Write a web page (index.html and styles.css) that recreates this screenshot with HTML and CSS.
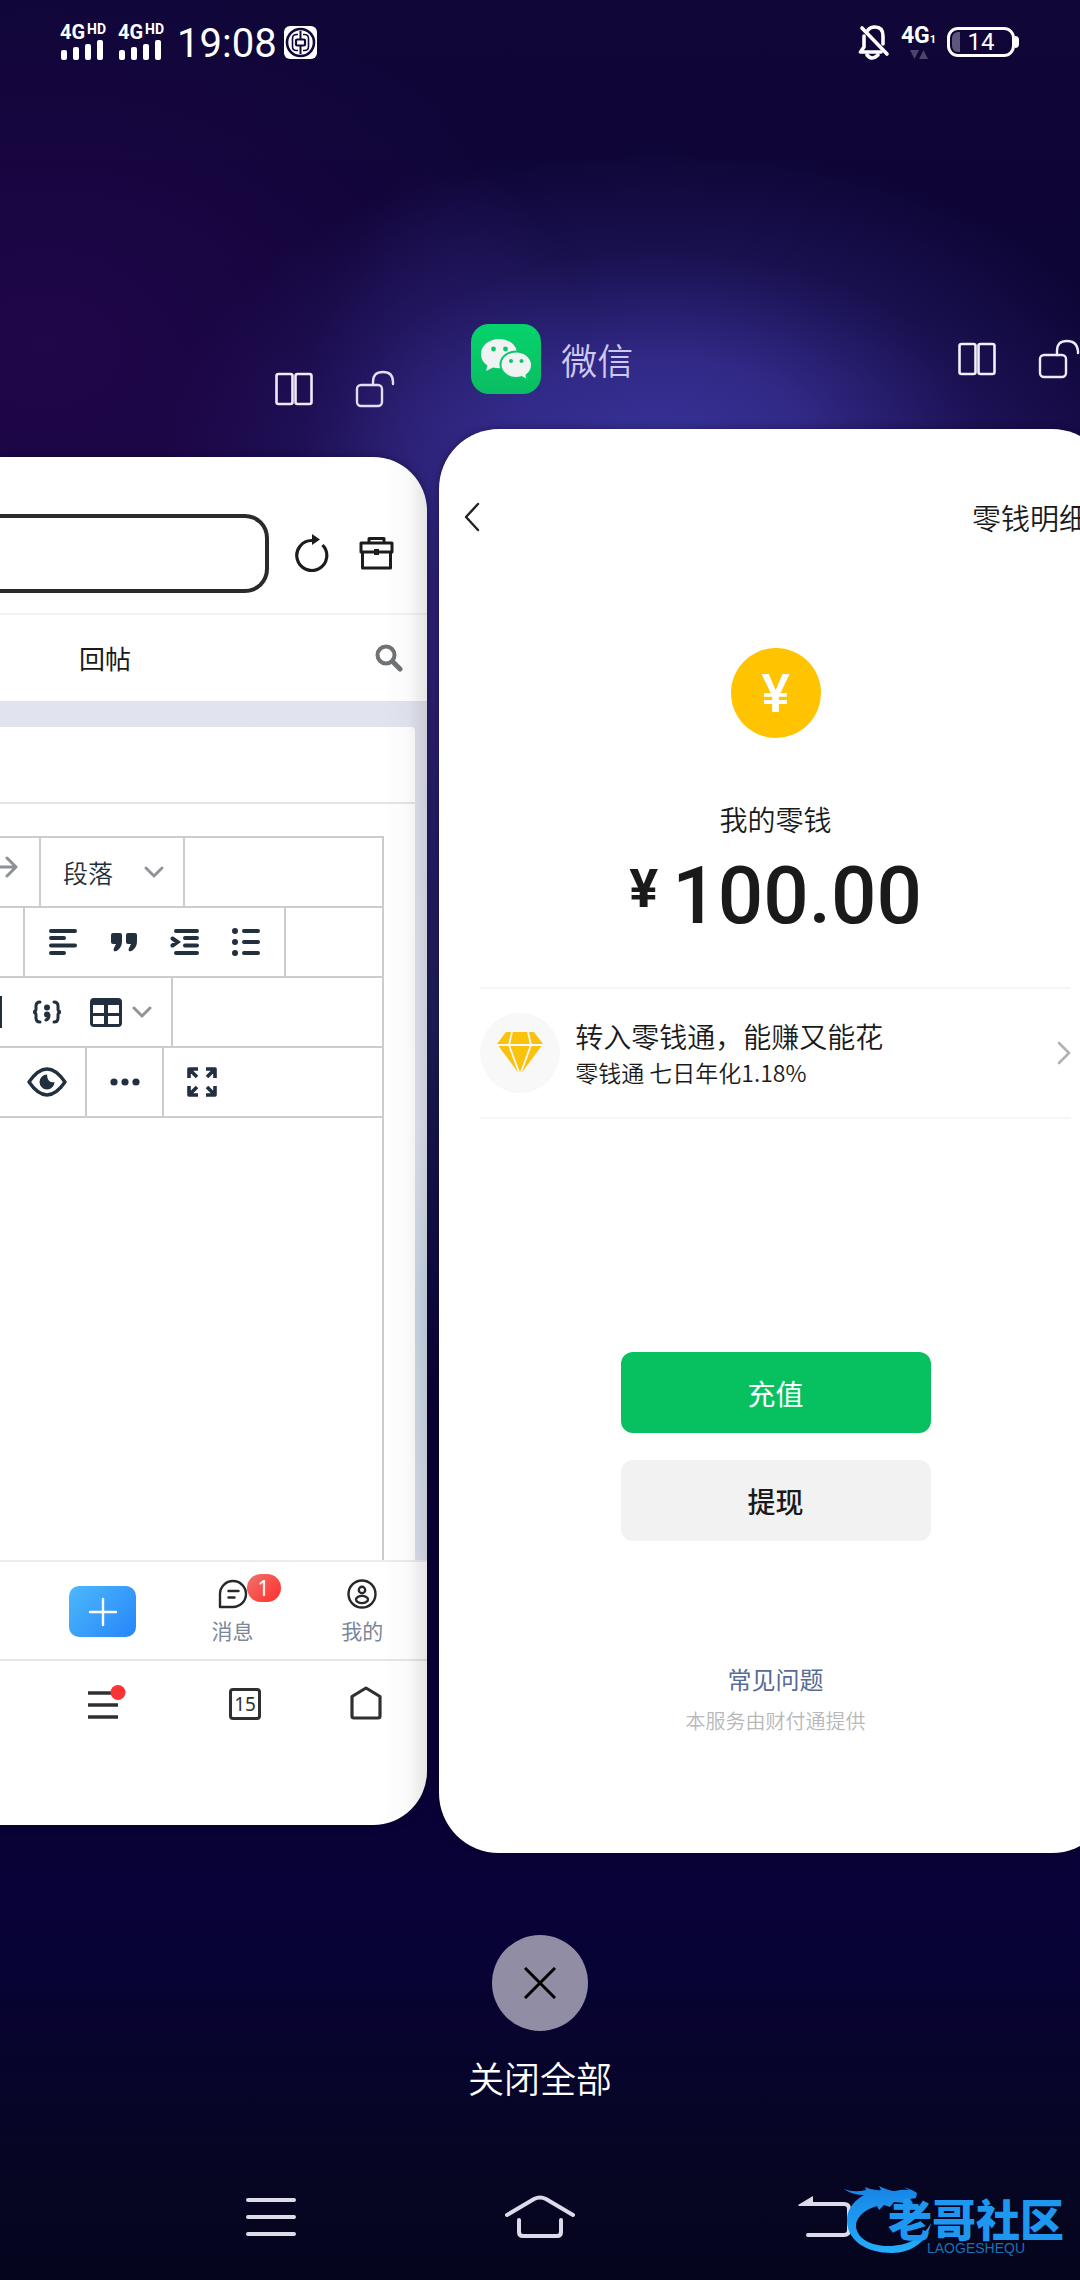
FILE: index.html
```html
<!DOCTYPE html>
<html lang="zh-CN">
<head>
<meta charset="utf-8">
<meta name="viewport" content="width=device-width, initial-scale=1">
<title>最近任务</title>
<link rel="stylesheet" href="styles.css">
</head>
<body>
<header class="status">
  <div class="status-group">
    <div class="signal">
      <div class="signal-label"><b>4G</b><b class="hd">HD</b></div>
      <svg width="44" height="20" viewBox="0 0 44 20" fill="#fff"><rect x="1" y="10" width="6" height="10" rx="2"/><rect x="13" y="7" width="6" height="13" rx="2"/><rect x="25" y="4" width="6" height="16" rx="2"/><rect x="37" y="0" width="6" height="20" rx="2"/></svg>
    </div>
    <div class="signal">
      <div class="signal-label"><b>4G</b><b class="hd">HD</b></div>
      <svg width="44" height="20" viewBox="0 0 44 20" fill="#fff"><rect x="1" y="10" width="6" height="10" rx="2"/><rect x="13" y="7" width="6" height="13" rx="2"/><rect x="25" y="4" width="6" height="16" rx="2"/><rect x="37" y="0" width="6" height="20" rx="2"/></svg>
    </div>
    <time class="clock">19:08</time>
    <svg width="33" height="33" viewBox="0 0 33 33"><rect width="33" height="33" rx="6" fill="#fff"/><g fill="none" stroke="#12073a"><circle cx="16.500" cy="16.500" r="13.500" stroke-width="2.600"/><path d="M14 8.500h-1.500q-4 0-4 4v8q0 4 4 4H14M19 8.500h1.500q4 0 4 4v8q0 4-4 4H19" stroke-width="1.600"/><rect x="12" y="13.500" width="9" height="6" rx="1" stroke-width="2.200"/><path d="M16.500 5v8M16.500 20v8" stroke-width="2"/></g></svg>
  </div>
  <div class="status-group status-right">
    <svg width="32" height="36" viewBox="0 0 32 36" fill="none" stroke="#fff" stroke-width="3.600" stroke-linecap="round" stroke-linejoin="round"><path d="M6 12v11l-3.500 5H23M10 6q2-3 7-3 8 0 8 9v8"/><path d="M9 31q5 6 11 0"/><path d="M4 4l25 26"/></svg>
    <div class="net">
      <div class="net-label"><b>4G</b><b class="sim">1</b></div>
      <svg width="18" height="10" viewBox="0 0 18 10" fill="#4b446c"><path d="M0 0h9L4.500 9zM9 9h9L13.500 0z"/></svg>
    </div>
    <div class="battery"><span class="battery-fill"></span><span class="battery-text">14</span></div>
  </div>
</header>

<main class="recents">
  <section class="task task-browser">
    <div class="task-head">
      <button class="icon-btn" aria-label="分屏"><svg width="38" height="34" viewBox="0 0 38 34" fill="none" stroke="#f3e9fb" stroke-width="2.600"><rect x="1.500" y="2" width="16" height="30" rx="2"/><rect x="20.500" y="2" width="16" height="30" rx="2"/></svg></button>
      <button class="icon-btn" aria-label="锁定"><svg width="40" height="38" viewBox="0 0 40 38" fill="none" stroke="#e6dcf6" stroke-width="2.400" stroke-linecap="round"><rect x="2" y="15" width="25" height="21" rx="4"/><path d="M18 15v-3q0-10 10-10t10 10v2"/></svg></button>
    </div>
    <article class="card browser">
      <div class="address">
        <input class="url" type="text" aria-label="地址">
        <button class="icon-btn" aria-label="刷新"><svg width="34" height="38" viewBox="0 0 34 38"><path d="M27.500 10.500A15 15 0 1 1 17 6" fill="none" stroke="#1c1c1c" stroke-width="3.200" transform="translate(0 0.500)"/><path d="M17 0l8 5.500-8 5.500z" fill="#1c1c1c"/></svg></button>
        <button class="icon-btn" aria-label="工具箱"><svg width="35" height="34" viewBox="0 0 35 34" fill="none" stroke="#1c1c1c" stroke-width="3" stroke-linejoin="round"><path d="M2 7h31v9H2zM3.500 16v16h28V16M10 7V2.500h15V7"/><path d="M17.500 13v6" stroke-width="5"/></svg></button>
      </div>
      <div class="tabs">
        <a class="tab" href="#reply">回帖</a>
        <button class="icon-btn" aria-label="搜索"><svg width="28" height="28" viewBox="0 0 28 28" fill="none" stroke="#6f7376" stroke-linecap="round"><circle cx="11" cy="11" r="8.500" stroke-width="4"/><path d="M18 18l7 7" stroke-width="5"/></svg></button>
      </div>
      <div class="page">
        <div class="panel">
          <div class="panel-title"></div>
          <div class="editor">
            <div class="tools">
              <div class="group group-redo"><button class="icon-btn" aria-label="重做"><svg width="20" height="24" viewBox="0 0 20 24" fill="none" stroke="#8d9095" stroke-width="3" stroke-linecap="round" stroke-linejoin="round"><path d="M0 12h16M7 3l9 9-9 9"/></svg></button></div>
              <div class="group group-format">
                <select class="format" aria-label="段落格式"><option>段落</option></select>
                <svg width="20" height="12" viewBox="0 0 20 12" fill="none" stroke="#919499" stroke-width="3" stroke-linecap="round" stroke-linejoin="round"><path d="M2 2l8 8 8-8"/></svg>
              </div>
            </div>
            <div class="tools">
              <div class="group group-lead"></div>
              <div class="group group-lists">
                <button class="tool" aria-label="左对齐"><svg width="30" height="28" viewBox="0 0 30 28" stroke="#222f3e" stroke-width="4" stroke-linecap="round"><path d="M3 3h24M3 10h13M3 17.500h24M3 25h13"/></svg></button>
                <button class="tool" aria-label="引用"><svg width="28" height="20" viewBox="0 0 28 20" fill="#222f3e"><path d="M2 1h8q2 0 2 2v6q0 6-4 9-2 2-4 1-1-1 0-3l2-4H3q-2 0-2-2V3q0-2 2-2zM17 1h8q2 0 2 2v6q0 6-4 9-2 2-4 1-1-1 0-3l2-4h-3q-2 0-2-2V3q0-2 2-2z"/></svg></button>
                <button class="tool" aria-label="增加缩进"><svg width="30" height="28" viewBox="0 0 30 28" fill="none" stroke="#222f3e" stroke-width="4" stroke-linecap="round"><path d="M6 3h21M15 10h12M15 17.500h12M6 25h21M2.500 10.500l5 3.500-5 3.500"/></svg></button>
                <button class="tool" aria-label="项目列表"><svg width="30" height="28" viewBox="0 0 30 28" stroke="#222f3e" stroke-width="4" stroke-linecap="round"><path d="M13 3h14M13 14h14M13 25h14"/><path d="M4 3h0M4 14h0M4 25h0" stroke-width="6"/></svg></button>
              </div>
            </div>
            <div class="tools">
              <div class="group group-insert">
                <svg class="media" width="2" height="32" viewBox="0 0 2 32"><path d="M0 0h2v32H0z" fill="#222f3e"/></svg>
                <button class="tool" aria-label="代码示例"><svg width="30" height="24" viewBox="0 0 30 24" fill="none" stroke="#222f3e" stroke-width="3" stroke-linecap="round"><path d="M8 2Q4 2 4 6v3q0 3-3 3 3 0 3 3v3q0 4 4 4M22 2q4 0 4 4v3q0 3 3 3-3 0-3 3v3q0 4-4 4"/><path d="M15 7.500h0M15 14.500h0" stroke-width="6"/><path d="M17 15q0 4-3 5"/></svg></button>
                <button class="tool" aria-label="表格"><svg width="32" height="29" viewBox="0 0 32 29"><path fill="#222f3e" fill-rule="evenodd" d="M4 0h24q4 0 4 4v21q0 4-4 4H4q-4 0-4-4V4q0-4 4-4zM3 7v8h11V7zM18 7v8h11V7zM3 18v8h11v-8zM18 18v8h11v-8z"/></svg></button>
                <svg width="20" height="12" viewBox="0 0 20 12" fill="none" stroke="#919499" stroke-width="3" stroke-linecap="round" stroke-linejoin="round"><path d="M2 2l8 8 8-8"/></svg>
              </div>
            </div>
            <div class="tools">
              <div class="group group-view"><button class="tool" aria-label="预览"><svg width="40" height="30" viewBox="0 0 40 30"><path d="M2 15Q11 2 20 2t18 13Q29 28 20 28T2 15z" fill="none" stroke="#222f3e" stroke-width="3.400" stroke-linejoin="round"/><path d="M20 7.500a7.500 7.500 0 1 0 7.500 7.500q-7 2-7.500-7.500z" fill="#222f3e"/></svg></button></div>
              <div class="group group-more"><button class="tool" aria-label="更多"><svg width="30" height="8" viewBox="0 0 30 8" fill="#222f3e"><circle cx="4" cy="4" r="3.600"/><circle cx="15" cy="4" r="3.600"/><circle cx="26" cy="4" r="3.600"/></svg></button></div>
              <div class="group group-full"><button class="tool" aria-label="全屏"><svg width="30" height="30" viewBox="0 0 30 30" fill="none" stroke="#222f3e" stroke-width="3.600" stroke-linejoin="round"><path d="M2 11V2h9M2 2l8 8M19 2h9v9M28 2l-8 8M2 19v9h9M2 28l8-8M28 19v9h-9M28 28l-8-8"/></svg></button></div>
            </div>
            <div class="editor-body"></div>
          </div>
        </div>
      </div>
      <nav class="app-bar">
        <button class="add" aria-label="发帖"><svg width="30" height="30" viewBox="0 0 30 30" stroke="#fff" stroke-width="2.400" stroke-linecap="round"><path d="M15 2v26M2 15h26"/></svg></button>
        <a class="app-item" href="#messages">
          <svg width="30" height="30" viewBox="0 0 30 30" fill="none" stroke="#26282b" stroke-width="2.400" stroke-linecap="round" stroke-linejoin="round"><path d="M2 28V15A13 13 0 1 1 15 28z"/><path d="M10.500 12h10M10.500 18.500h6"/></svg>
          <span class="badge">1</span>
          <span>消息</span>
        </a>
        <a class="app-item" href="#me">
          <svg width="30" height="30" viewBox="0 0 30 30" fill="none" stroke="#26282b" stroke-width="2.400"><circle cx="15" cy="15" r="13.500"/><circle cx="15" cy="11" r="3.200"/><ellipse cx="15" cy="20.500" rx="6" ry="3.600"/></svg>
          <span>我的</span>
        </a>
      </nav>
      <nav class="browser-bar">
        <button class="icon-btn" aria-label="菜单"><svg width="48" height="36" viewBox="0 0 48 36"><path d="M9 8h30M9 20h30M9 32h30" stroke="#303030" stroke-width="3.400"/><circle cx="39" cy="7.500" r="7.500" fill="#fb3336"/></svg></button>
        <button class="icon-btn pages">15</button>
        <button class="icon-btn" aria-label="主页"><svg width="32" height="36" viewBox="0 0 32 36" fill="none" stroke="#303030" stroke-width="3.200" stroke-linejoin="round"><path d="M2 11.500L16 3l14 8.500V31q0 2-2 2H4q-2 0-2-2z"/></svg></button>
      </nav>
    </article>
  </section>

  <section class="task task-wechat">
    <div class="task-head">
      <svg width="70" height="70" viewBox="0 0 70 70"><defs><linearGradient id="wx" x2="0" y2="1"><stop stop-color="#06d36c"/><stop offset="1" stop-color="#0abd62"/></linearGradient></defs><rect width="70" height="70" rx="18" fill="url(#wx)"/><path d="M28 15c-10 0-18 6.500-18 15 0 5 2.500 9 6.500 11.500L15 47l7-3.500q3 .8 6 .8c10 0 18-6.500 18-14.800S38 15 28 15z" fill="#f0f2f4"/><path d="M45 27.500c-8.500 0-15.500 5.500-15.500 13S36.500 54 45 54q3 0 5.500-.8l6 3-1-5c3.500-2.500 5.500-6 5.500-10.200 0-7.500-7-13.500-16-13.500z" fill="#f0f2f4" stroke="#08c767" stroke-width="2"/><g fill="#08c767"><circle cx="22.500" cy="25" r="2.400"/><circle cx="34.500" cy="25" r="2.400"/><circle cx="40" cy="37" r="2"/><circle cx="50.500" cy="37" r="2"/></g></svg>
      <h2 class="task-name">微信</h2>
      <button class="icon-btn" aria-label="分屏"><svg width="38" height="34" viewBox="0 0 38 34" fill="none" stroke="#f3effd" stroke-width="2.600"><rect x="1.500" y="2" width="16" height="30" rx="2"/><rect x="20.500" y="2" width="16" height="30" rx="2"/></svg></button>
      <button class="icon-btn" aria-label="锁定"><svg width="42" height="40" viewBox="0 0 42 40" fill="none" stroke="#eee9fb" stroke-width="2.400" stroke-linecap="round"><rect x="2" y="16" width="26" height="22" rx="4"/><path d="M19 16v-4q0-10 10-10t11 10v2"/></svg></button>
    </div>
    <article class="card wallet">
      <div class="wallet-head">
        <button class="icon-btn" aria-label="返回"><svg width="18" height="30" viewBox="0 0 18 30" fill="none" stroke="#222" stroke-width="2.400" stroke-linecap="round" stroke-linejoin="round"><path d="M15 2L3 15l12 13"/></svg></button>
        <a class="detail" href="#detail">零钱明细</a>
      </div>
      <div class="coin">¥</div>
      <p class="wallet-label">我的零钱</p>
      <p class="amount"><span class="yen">¥</span><span>100.00</span></p>
      <a class="promo" href="#lqt">
        <span class="gem"><svg width="46" height="44" viewBox="0 0 46 44"><path d="M9 1h28l9 12-23 31L0 13z" fill="#f9c30d"/><path d="M0 14h46M15 1l-3 13 11 30 11-30-3-13M23 1v0" fill="none" stroke="#f8f8f8" stroke-width="1.800"/></svg></span>
        <span class="promo-text"><span class="promo-title">转入零钱通，能赚又能花</span><span class="promo-sub">零钱通 七日年化1.18%</span></span>
        <svg width="14" height="24" viewBox="0 0 14 24" fill="none" stroke="#b2b2b2" stroke-width="2.600" stroke-linecap="round"><path d="M2 2l10 10L2 22"/></svg>
      </a>
      <div class="actions">
        <button class="btn primary">充值</button>
        <button class="btn">提现</button>
      </div>
      <a class="faq" href="#faq">常见问题</a>
      <p class="provider">本服务由财付通提供</p>
    </article>
  </section>
</main>

<section class="clear">
  <button class="clear-btn" id="clear-all" aria-label="关闭全部"><svg width="32" height="32" viewBox="0 0 32 32" stroke="#000" stroke-width="3"><path d="M1 1l30 30M31 1L1 31"/></svg></button>
  <label class="clear-label" for="clear-all">关闭全部</label>
</section>

<nav class="sys-nav">
  <button class="icon-btn" aria-label="最近任务"><svg width="50" height="40" viewBox="0 0 50 40" stroke="#dddbe9" stroke-width="4" stroke-linecap="round"><path d="M2 3h46M2 20h46M2 37h46"/></svg></button>
  <button class="icon-btn" aria-label="主屏幕"><svg width="70" height="44" viewBox="0 0 70 44" fill="none" stroke="#dddbe9" stroke-width="4" stroke-linecap="round"><path d="M2 20L29 4q6-3 12 0l27 16M14 25v12q0 4 4 4h34q4 0 4-4V25"/></svg></button>
  <button class="icon-btn" aria-label="返回"><svg width="54" height="42" viewBox="0 0 54 42"><path d="M15 8h31q5 0 5 5v21q0 5-5 5H10" fill="none" stroke="#dddbe9" stroke-width="4" stroke-linecap="round"/><path d="M0 9L15 0v10H1z" fill="#dddbe9"/></svg></button>
  <div class="brand">
    <svg class="dragon" width="92" height="76" viewBox="0 0 92 76"><defs><linearGradient id="dg" x2="0" y2="1"><stop stop-color="#1784e6"/><stop offset="1" stop-color="#25adfb"/></linearGradient></defs><path fill="url(#dg)" d="M0 10q10 4 22 1l-1-3q8 4 16 3l-2-4q10 5 16 5 8-2 14-1l-5-3q9 3 13 6l-1 5-6 1 3 4-4 4-5-4-10-1-4 5-6-2-5 5-2-4C19 31 11 40 12 48c2 13 17 19 32 19 20 0 36-9 43-23-3 18-19 30-39 30C23 74 4 62 3 43 2 32 9 22 20 16Q8 16 0 10z"/></svg>
    <div class="brand-text"><strong>老哥社区</strong><small>LAOGESHEQU</small></div>
  </div>
</nav>
</body>
</html>
```
FILE: styles.css
```css
* { box-sizing: border-box; }

body {
  margin: 0;
  min-height: 100vh;
  display: flex;
  flex-direction: column;
  overflow-x: hidden;
  color: #1a1a1a;
  font-family: "Noto Sans CJK SC", sans-serif;
  background:
    radial-gradient(ellipse 46% 13% at 61% 19.5%, #383299 0%, rgba(54, 47, 146, 0.85) 30%, rgba(42, 34, 118, 0.4) 65%, rgba(20, 10, 70, 0) 100%),
    radial-gradient(ellipse 16% 20% at 42% 27%, rgba(58, 44, 144, 0.7), rgba(20, 10, 70, 0) 100%),
    radial-gradient(ellipse 50% 16% at 4% 15%, #20064a, rgba(30, 6, 72, 0) 100%),
    linear-gradient(#100638 0%, #0d0535 14%, #150640 20%, #1c1d54 45%, #0a0236 62%, #080238 84%, #060623 95%, #05051e 100%);
}

p, h2 { margin: 0; font-weight: 400; }
a { color: inherit; text-decoration: none; }
svg { display: block; flex: none; }

button {
  padding: 0;
  border: 0;
  background: none;
  color: inherit;
  font: inherit;
}

.icon-btn { flex: none; display: block; }

/* Status bar */
.status {
  height: 84px;
  padding: 0 65px 0 60px;
  display: flex;
  justify-content: space-between;
  align-items: center;
  color: #fff;
  font-family: Roboto, sans-serif;
}
.status-group { display: flex; align-items: center; gap: 7px; }
.signal { width: 51px; display: flex; flex-direction: column; align-items: flex-start; }
.signal-label { display: flex; align-items: flex-start; gap: 2px; height: 16px; font-size: 20px; line-height: 16px; }
.hd { font-size: 14px; line-height: 10px; }
.clock { margin-left: 1px; font-size: 40px; line-height: 48px; padding-top: 4px; }
.status-right { gap: 12px; }
.net { width: 33px; display: flex; flex-direction: column; align-items: center; gap: 2px; }
.net-label { display: flex; align-items: flex-end; font-size: 23px; line-height: 24px; }
.sim { font-size: 11px; line-height: 16px; }
.battery {
  position: relative;
  width: 68px;
  height: 30px;
  border: 3px solid #fff;
  border-radius: 11px;
  display: flex;
  align-items: center;
  justify-content: center;
  font-size: 24px;
  line-height: 24px;
}
.battery::after {
  content: "";
  position: absolute;
  right: -7px;
  top: 6px;
  width: 4px;
  height: 12px;
  border-radius: 0 4px 4px 0;
  background: #fff;
}
.battery-fill {
  position: absolute;
  left: 2px;
  top: 2px;
  bottom: 2px;
  width: 8px;
  border-radius: 6px 0 0 6px;
  background: #5d587b;
}

/* Recent tasks */
.recents {
  padding-top: 205px;
  display: grid;
  grid-template-columns: 2fr 3fr;
  gap: 12px;
  align-items: end;
  overflow: hidden;
}
.task { min-width: 0; }
.task-browser { margin-bottom: 28px; }
.task-wechat { width: 105%; }
.task-head { height: 136px; display: flex; align-items: center; justify-content: flex-end; gap: 42px; padding-right: 32px; }
.task-wechat .task-head { height: 140px; padding: 0 32px; }
.task-name { flex: 1; margin-left: -22px; color: #cfc8f2; font-size: 36px; line-height: 48px; font-weight: 350; }
.card { background: #fff; overflow: hidden; box-shadow: 0 0 8px rgba(0, 0, 20, 0.4); }

/* Browser card */
.browser { position: relative; border-radius: 0 54px 54px 0; }
.browser::after {
  content: "";
  position: absolute;
  top: 0;
  right: 0;
  bottom: 0;
  width: 48px;
  background: linear-gradient(90deg, rgba(0, 0, 0, 0), rgba(0, 0, 0, 0.02) 60%, rgba(0, 0, 0, 0.1));
  pointer-events: none;
}
.address {
  height: 158px;
  padding: 36px 33px 0 0;
  display: flex;
  align-items: center;
  gap: 30px;
  border-bottom: 2px solid #f3f3f3;
}
.url {
  flex: 1;
  min-width: 0;
  height: 79px;
  margin-right: -4px;
  border: 4px solid #2a2a2a;
  border-left: 0;
  border-radius: 0 24px 24px 0;
  background: #fff;
}
.tabs { height: 86px; padding: 0 24px 0 79px; display: flex; align-items: center; justify-content: space-between; }
.tab { font-size: 26px; line-height: 36px; }
.page { padding: 26px 12px 0 0; background: linear-gradient(#e1e3ee 0%, #e3e5f3 50%, #cddae8 70%, #dde0ee 100%); }
.panel { border-radius: 0 4px 0 0; background: #fff; padding-right: 31px; }
.panel-title { height: 77px; margin-right: -31px; border-bottom: 2px solid #e4e4e4; }
.editor { margin-top: 32px; border: 2px solid #ccc; border-width: 2px 2px 0 0; }
.tools { height: 70px; display: flex; border-bottom: 2px solid #ccc; }
.group { display: flex; align-items: center; border-right: 2px solid #ccc; }
.group-redo { width: 41px; padding-bottom: 10px; }
.group-format { width: 144px; padding-left: 22px; justify-content: space-between; padding-right: 19px; }
.format {
  appearance: none;
  width: 60px;
  padding: 0;
  border: 0;
  background: none;
  color: #222f3e;
  font: 350 25px/36px "Noto Sans CJK SC", sans-serif;
}
.group-lead { width: 25px; }
.group-lists { width: 261px; padding: 0 8px; }
.tool { flex: 1; display: flex; align-items: center; justify-content: center; }
.group-insert { width: 173px; padding-right: 20px; }
.group-insert .tool { flex: none; }
.group-insert .media { margin-right: 30px; }
.group-insert .tool + .tool { margin: 0 10px 0 28px; }
.group-view { width: 87px; padding-left: 8px; }
.group-more { width: 77px; }
.group-full { width: 75px; border-right: 0; }
.editor-body { height: 442px; }

.app-bar {
  height: 99px;
  padding: 2px 0 0 38px;
  display: grid;
  grid-template-columns: repeat(3, 1fr);
  align-items: center;
  justify-items: center;
  border-top: 2px solid #ececec;
}
.add {
  width: 67px;
  height: 51px;
  border-radius: 10px;
  display: flex;
  align-items: center;
  justify-content: center;
  background: linear-gradient(135deg, #4cb9fb, #2685fa);
}
.app-item {
  position: relative;
  display: flex;
  flex-direction: column;
  align-items: center;
  gap: 7px;
  color: #7d8799;
  font-size: 21px;
  line-height: 28px;
}
.badge {
  position: absolute;
  left: 35px;
  top: -5px;
  width: 34px;
  height: 28px;
  border-radius: 14px;
  background: linear-gradient(135deg, #f0736a, #ff2d2d);
  color: #fff;
  text-align: center;
  font-family: "Noto Sans", sans-serif;
}
.browser-bar {
  height: 166px;
  padding: 24px 17px 0 38px;
  display: grid;
  grid-template-columns: 130fr 154fr 88fr;
  align-items: start;
  justify-items: center;
  border-top: 2px solid #e6e6e6;
}
.pages {
  width: 32px;
  height: 32px;
  margin-top: 3px;
  border: 3px solid #303030;
  border-radius: 4px;
  color: #303030;
  font: 19px/24px "Noto Sans", sans-serif;
}

/* Wallet card */
.wallet { border-radius: 60px; padding-bottom: 114px; display: flex; flex-direction: column; }
.wallet-head { height: 176px; padding: 0 24px; display: flex; align-items: center; justify-content: space-between; }
.detail { font-size: 29px; line-height: 40px; font-weight: 350; }
.coin {
  align-self: center;
  width: 90px;
  height: 90px;
  margin-top: 43px;
  border-radius: 50%;
  background: #ffc300;
  color: #fff;
  text-align: center;
  font: 500 54px/92px Roboto, sans-serif;
}
.wallet-label { margin-top: 61px; text-align: center; font-size: 28px; line-height: 40px; font-weight: 350; }
.amount {
  margin-top: 17px;
  display: flex;
  justify-content: center;
  gap: 14px;
  font: 500 80px/80px Roboto, sans-serif;
}
.yen { font-size: 54px; line-height: 66px; font-weight: 700; }
.promo {
  height: 132px;
  margin: 51px 41px 0;
  display: flex;
  align-items: center;
  border: 2px solid #f5f5f5;
  border-width: 2px 0;
  font-weight: 350;
}
.gem {
  width: 80px;
  height: 80px;
  margin-right: 15px;
  border-radius: 50%;
  background: #f8f8f8;
  display: flex;
  align-items: center;
  justify-content: center;
}
.promo-text { flex: 1; display: flex; flex-direction: column; }
.promo-title { font-size: 28px; line-height: 38px; }
.promo-sub { font-size: 23px; line-height: 34px; }
.actions { width: 310px; margin: 233px auto 0; display: flex; flex-direction: column; gap: 27px; }
.btn { height: 81px; border-radius: 12px; background: #f2f2f2; font-size: 28px; line-height: 40px; font-weight: 500; }
.primary { background: #07c160; color: #fff; font-weight: 400; }
.faq { margin-top: 120px; text-align: center; color: #576b95; font-size: 24px; line-height: 36px; }
.provider { margin-top: 6px; text-align: center; color: #b8b8b8; font-size: 20px; line-height: 36px; font-weight: 350; }

/* Close all */
.clear { margin-top: 82px; display: flex; flex-direction: column; align-items: center; gap: 20px; }
.clear-btn {
  width: 96px;
  height: 96px;
  border-radius: 50%;
  background: #918da4;
  display: flex;
  align-items: center;
  justify-content: center;
}
.clear-label { color: #fff; font-size: 36px; line-height: 52px; font-weight: 350; }

/* System navigation */
.sys-nav {
  position: relative;
  margin-top: auto;
  height: 127px;
  padding: 0 228px 0 246px;
  display: grid;
  grid-template-columns: 1fr auto 1fr;
  align-items: center;
}
.sys-nav > .icon-btn { justify-self: start; }
.sys-nav > .icon-btn:nth-child(3) { justify-self: end; }
.sys-nav { padding: 0 228px; }
.sys-nav > .icon-btn:first-child { margin-left: 18px; }
.brand {
  position: absolute;
  right: 16px;
  top: 26px;
  display: flex;
  color: #1e97f0;
}
.dragon { margin-right: -48px; }
.brand-text { padding-top: 16px; display: flex; flex-direction: column; align-items: center; }
.brand-text strong { font-size: 44px; line-height: 46px; font-weight: 900; }
.brand-text small { color: #1c6fb0; font: 14px/14px "Liberation Sans", sans-serif; }
```
